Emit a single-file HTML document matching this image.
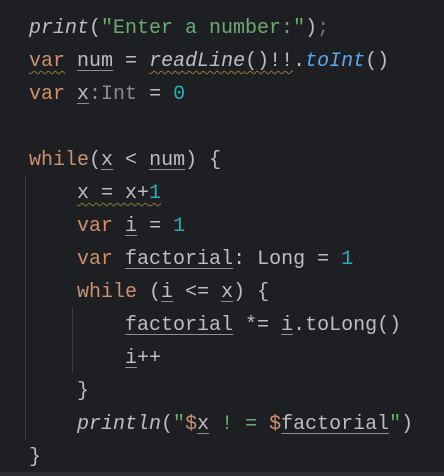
<!DOCTYPE html>
<html><head><style>
html,body{margin:0;padding:0;}
body{width:444px;height:476px;background:#1e1f22;overflow:hidden;position:relative;}
pre{position:absolute;left:29px;top:12px;margin:0;font-family:"Liberation Mono",monospace;font-size:20px;line-height:33px;color:#bcbec4;}
.k{color:#cf8e6d}.s{color:#6aab73}.n{color:#2aacb8}.f{color:#56a8f5;font-style:italic}.i{font-style:italic}.t{color:#8c8c8c}.g{color:#6f737a}
.u{text-decoration:underline;text-decoration-color:#8c8f96;text-underline-offset:4px;text-decoration-thickness:1px}
.w{text-decoration:underline wavy #8a7a3a;text-underline-offset:4px;text-decoration-thickness:1px}
.guide{position:absolute;width:1px;background:#393b40;}
.bot{position:absolute;left:0;bottom:0;width:444px;height:4px;background:#2b2d30;}
</style></head><body>
<div class="guide" style="left:25px;top:176px;height:264px"></div>
<div class="guide" style="left:72px;top:307px;height:66px"></div>
<pre><span class="i">print</span>(<span class="s">"Enter a number:"</span>)<span class="g">;</span>
<span class="k w">var</span> <span class="u">num</span> = <span class="w"><span class="i">readLine</span>()!!</span>.<span class="f">toInt</span>()
<span class="k">var</span> <span class="u">x</span><span class="t">:Int</span> = <span class="n">0</span>

<span class="k">while</span>(<span class="u">x</span> &lt; <span class="u">num</span>) {
    <span class="w">x = x+<span class="n">1</span></span>
    <span class="k">var</span> <span class="u">i</span> = <span class="n">1</span>
    <span class="k">var</span> <span class="u">factorial</span>: Long = <span class="n">1</span>
    <span class="k">while</span> (<span class="u">i</span> &lt;= <span class="u">x</span>) {
        <span class="u">factorial</span> *= <span class="u">i</span>.toLong()
        <span class="u">i</span>++
    }
    <span class="i">println</span>(<span class="s">"</span><span class="k">$</span><span class="u">x</span><span class="s"> ! = </span><span class="k">$</span><span class="u">factorial</span><span class="s">"</span>)
}</pre>
<div class="bot"></div>
</body></html>
